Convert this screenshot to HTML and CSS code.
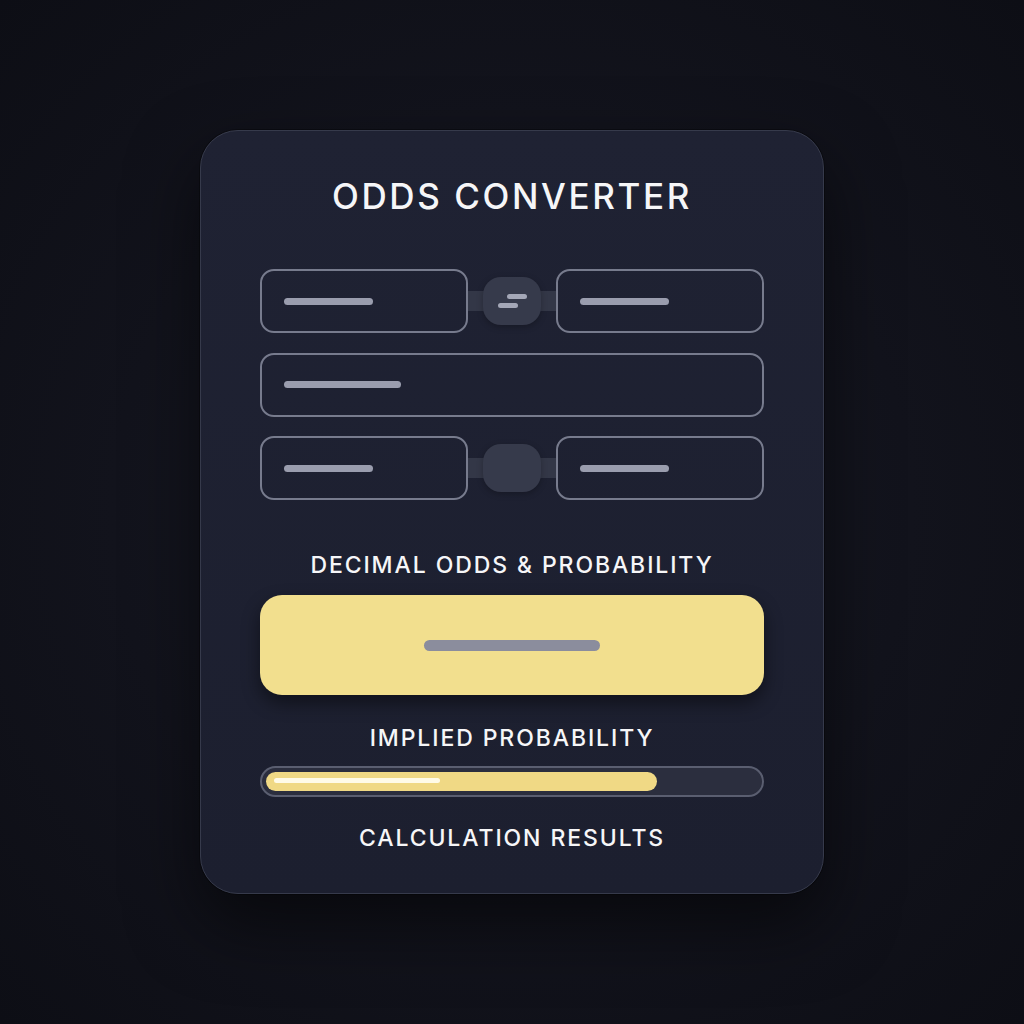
FILE: index.html
```html
<!DOCTYPE html>
<html lang="en">
<head>
    <meta charset="UTF-8">
    <meta name="viewport" content="width=device-width, initial-scale=1.0">
    <title>Odds Converter</title>
    <link rel="stylesheet" href="styles.css">
</head>
<body>

    <div class="converter-card">
        <h1 class="card-title">ODDS CONVERTER</h1>

        <!-- Odds input rows -->
        <div class="input-rows">
            <div class="pair-row">
                <div class="field"><span class="placeholder short"></span></div>
                <div class="link">
                    <span class="link-bar"></span>
                    <span class="link-knob">
                        <span class="knob-line top"></span>
                        <span class="knob-line bottom"></span>
                    </span>
                </div>
                <div class="field"><span class="placeholder short"></span></div>
            </div>

            <div class="field wide"><span class="placeholder long"></span></div>

            <div class="pair-row">
                <div class="field"><span class="placeholder short"></span></div>
                <div class="link">
                    <span class="link-bar"></span>
                    <span class="link-knob"></span>
                </div>
                <div class="field"><span class="placeholder short"></span></div>
            </div>
        </div>

        <h2 class="section-label first">DECIMAL ODDS &amp; PROBABILITY</h2>
        <div class="result-box"><span class="result-line"></span></div>

        <h2 class="section-label">IMPLIED PROBABILITY</h2>
        <div class="progress">
            <div class="progress-fill" style="width: 79.5%;">
                <span class="progress-shine"></span>
            </div>
        </div>

        <h2 class="section-label last">CALCULATION RESULTS</h2>
    </div>

</body>
</html>
```

FILE: styles.css
```css
/* --- General Setup --- */
:root {
    --page-bg: #11121b;
    --card-bg: #1d2030;
    --card-border: #363a4b;
    --field-border: #777b8d;
    --placeholder: #9a9dae;
    --accent: #f2df8e;
    --text-color: #f6f6f8;
}

body {
    font-family: 'Inter', 'Open Sans', sans-serif;
    margin: 0;
    height: 100vh;
    display: flex;
    justify-content: center;
    align-items: flex-start;
    background-color: var(--page-bg);
    background-image: radial-gradient(ellipse at 50% 50%, #181a25 0%, #12131c 55%, #0d0e15 100%);
}

/* --- Card --- */
.converter-card {
    box-sizing: border-box;
    width: 624px;
    height: 764px;
    margin-top: 130px;
    padding: 43px 59px 0;
    background-color: var(--card-bg);
    background-image: linear-gradient(180deg, #1f2233 0%, #1c1f2f 100%);
    border: 1.5px solid var(--card-border);
    border-radius: 38px;
    box-shadow: 0 30px 70px rgba(0, 0, 0, 0.55), 0 0 0 1px rgba(0, 0, 0, 0.3);
    display: flex;
    flex-direction: column;
}

.card-title {
    margin: 0;
    font-size: 35px;
    line-height: 44px;
    font-weight: 500;
    letter-spacing: 2.6px;
    color: var(--text-color);
    text-align: center;
}

/* --- Input rows --- */
.input-rows {
    margin-top: 51px;
    display: flex;
    flex-direction: column;
    gap: 19.5px;
}

.pair-row {
    display: grid;
    grid-template-columns: 208px 1fr 208px;
    height: 64px;
}

.field {
    box-sizing: border-box;
    height: 64px;
    border: 2px solid var(--field-border);
    border-radius: 14px;
    padding-left: 22px;
    display: flex;
    align-items: center;
}

.placeholder {
    display: block;
    height: 7px;
    border-radius: 4px;
    background-color: var(--placeholder);
}

.placeholder.short { width: 89px; }
.placeholder.long { width: 117px; }

.link {
    position: relative;
    display: flex;
    align-items: center;
    justify-content: center;
}

.link-bar {
    position: absolute;
    left: 0;
    right: 0;
    top: 22px;
    height: 20px;
    background-color: #333747;
}

.link-knob {
    position: relative;
    width: 58px;
    height: 48px;
    border-radius: 18px;
    background-color: #363a4b;
    box-shadow: 0 2px 6px rgba(0, 0, 0, 0.25);
}

.knob-line {
    position: absolute;
    height: 5px;
    border-radius: 3px;
    background-color: #a4a7b7;
}

.knob-line.top { width: 20px; left: 24px; top: 17px; }
.knob-line.bottom { width: 20px; left: 15px; top: 26px; }

/* --- Results --- */
.section-label {
    margin: 28px 0 0;
    font-size: 23px;
    line-height: 30px;
    font-weight: 500;
    letter-spacing: 1.9px;
    color: var(--text-color);
    text-align: center;
}

.section-label.first { margin-top: 50px; }
.section-label.last { margin-top: 26px; }

.result-box {
    margin-top: 15px;
    height: 100px;
    border-radius: 22px;
    background-color: var(--accent);
    box-shadow: 0 8px 18px rgba(0, 0, 0, 0.45);
    display: flex;
    align-items: center;
    justify-content: center;
}

.result-line {
    display: block;
    width: 176px;
    height: 11px;
    border-radius: 6px;
    background-color: #8b8d9d;
}

.progress {
    box-sizing: border-box;
    margin-top: 13px;
    height: 31px;
    padding: 4px;
    border: 2px solid #5a5e70;
    border-radius: 16px;
    background-color: #2b2e3e;
}

.progress-fill {
    height: 100%;
    border-radius: 10px;
    background-color: #f0d985;
    padding: 6px 0 0 8px;
    box-sizing: border-box;
}

.progress-shine {
    display: block;
    width: 166px;
    height: 5px;
    border-radius: 3px;
    background-color: #fffbe8;
}
```
